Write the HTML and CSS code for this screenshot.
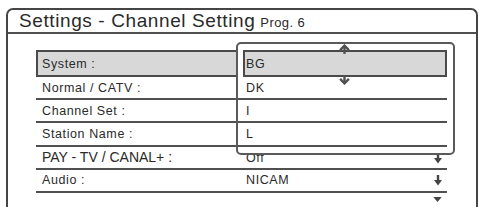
FILE: index.html
```html
<!DOCTYPE html>
<html lang="en">
<head>
  <meta charset="UTF-8" />
  <title>Settings - Channel Setting</title>
  <link rel="stylesheet" href="styles.css">
</head>
<body>
  <div class="screen">
    <div class="screen-head">
      <span class="title">Settings - Channel Setting</span>
      <span class="prog">Prog. 6</span>
    </div>

    <div class="screen-body">
      <div class="menu">
        <div class="row row-active"><span class="label">System :</span></div>
        <div class="row"><span class="label">Normal / CATV :</span></div>
        <div class="row"><span class="label">Channel Set :</span></div>
        <div class="row"><span class="label">Station Name :</span></div>
        <div class="row row-big">
          <span class="label">PAY - TV / CANAL+ :</span>
          <span class="value">Off</span>
          <svg class="arrow" viewBox="0 0 8 11"><rect x="2.8" y="0" width="2.4" height="5.5" /><polygon points="0,5 8,5 4,10.5" /></svg>
        </div>
        <div class="row">
          <span class="label">Audio :</span>
          <span class="value">NICAM</span>
          <svg class="arrow" viewBox="0 0 8 11"><rect x="2.8" y="0" width="2.4" height="5.5" /><polygon points="0,5 8,5 4,10.5" /></svg>
        </div>
        <div class="more">
          <svg class="more-arrow" viewBox="0 0 10 6"><polygon points="0,0 10,0 5,6" /></svg>
        </div>
      </div>

      <!-- список вариантов поверх меню -->
      <div class="popup">
        <svg class="caret caret-up" viewBox="0 0 10 10"><polyline points="1,5.5 5,1.5 9,5.5" /><line x1="5" y1="1.5" x2="5" y2="9" /></svg>
        <div class="opt opt-active">BG</div>
        <svg class="caret caret-down" viewBox="0 0 10 10"><polyline points="1,4.5 5,8.5 9,4.5" /><line x1="5" y1="1" x2="5" y2="8.5" /></svg>
        <div class="opt">DK</div>
        <div class="opt">I</div>
        <div class="opt">L</div>
      </div>
    </div>
  </div>
</body>
</html>
```

FILE: styles.css
```css
* {
  box-sizing: border-box;
  font-family: 'Liberation Sans', Arial, sans-serif;
}

html,
body {
  overflow: hidden;
}

body {
  margin: 0;
  background: #fff;
  color: #2a2a2a;
}

.screen {
  margin: 8px 0 0 6px;
  width: 472px;
  height: 199px;
  border: 2px solid #454545;
  border-bottom: none;
  border-radius: 7px 7px 0 0;
}

.screen-head {
  display: flex;
  align-items: baseline;
  height: 24px;
  padding-left: 11px;
  border-bottom: 2px solid #505050;
  line-height: 22px;
}

.title {
  font-size: 19px;
  letter-spacing: 0.6px;
}

.prog {
  margin-left: 5px;
  font-size: 13px;
  letter-spacing: 0.4px;
}

.screen-body {
  position: relative;
  padding: 16px 0 0 28px;
}

.menu {
  width: 411px;
}

.row {
  display: grid;
  grid-template-columns: 204px 1fr 8px;
  align-items: center;
  height: 23.2px;
  padding: 0 5px 0 6px;
  border-bottom: 2px solid #505050;
  font-size: 12.5px;
  letter-spacing: 0.6px;
}

.row-active {
  height: 27px;
  padding-left: 4px;
  border: 2px solid #4a4a4a;
  background: #d8d8d8;
}

.row-big .label {
  font-size: 14px;
  letter-spacing: 0;
}

.row-big .value {
  padding-top: 1px;
}

.row-big .arrow {
  margin-top: 2px;
}

.arrow {
  width: 8px;
  height: 11px;
  fill: #444;
}

.more {
  display: flex;
  justify-content: flex-end;
  padding: 4px 5px 0 0;
}

.more-arrow {
  width: 9px;
  height: 5px;
  fill: #444;
}

.popup {
  position: absolute;
  left: 228px;
  top: 8px;
  width: 219px;
  height: 113px;
  padding: 6px 6px 0 0;
  border: 2px solid #5a5a5a;
  border-radius: 5px;
  background: #fff;
  z-index: 2;
}

.opt {
  display: flex;
  align-items: center;
  height: 23.2px;
  padding-left: 8px;
  border-bottom: 2px solid #505050;
  font-size: 12.5px;
  letter-spacing: 0.6px;
}

.opt-active {
  height: 27px;
  margin-left: 5px;
  padding-left: 1px;
  border: 2px solid #4a4a4a;
  background: #d8d8d8;
}

.caret {
  position: absolute;
  left: 101px;
  width: 11px;
  height: 11px;
  fill: none;
  stroke: #505050;
  stroke-width: 2.2;
}

.caret-up {
  top: 0;
}

.caret-down {
  top: 30px;
}
```
